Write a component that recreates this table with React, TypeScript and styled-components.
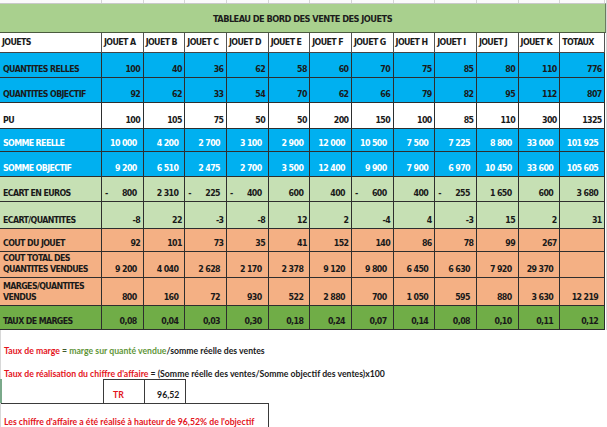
import React from "react";
import styled, { createGlobalStyle } from "styled-components";

const Global = createGlobalStyle`
  html, body { margin: 0; padding: 0; background: #ffffff; }
  body { font-family: "DejaVu Sans Condensed", "DejaVu Sans", sans-serif; }
  #root { width: 607px; height: 427px; overflow: hidden; }
`;

const COLS = "102px repeat(11, 41.67px) 45px";
const FONT = `"DejaVu Sans Condensed", "DejaVu Sans", sans-serif`;
const NOTE_FONT = `Lato, "Liberation Sans", sans-serif`;

const Page = styled.div`
  width: 607px;
  height: 427px;
  overflow: hidden;
  background: #fff;
  font-family: ${FONT};
`;

const Sheet = styled.div`
  width: 606px;
  border-right: 1px solid #d6d6d6;
`;

const GridRow = styled.div<{ $h: number }>`
  display: grid;
  grid-template-columns: ${COLS};
  height: ${(p) => p.$h}px;
`;

const GhostCell = styled.div`
  box-sizing: border-box;
  border-right: 1px solid #d4d4d4;
  background: #fafafa;
`;

const TitleBar = styled.div`
  box-sizing: border-box;
  height: 30px;
  width: 606px;
  background: #a9d08e;
  border-top: 1px solid #c9c9c9;
  border-bottom: 1px solid #4a5a3e;
  border-right: 1px solid #6d7d60;
  display: flex;
  align-items: center;
  justify-content: center;
  font-weight: 700;
  font-size: 9.2px;
  letter-spacing: -0.55px;
  color: #1c1c1c;
`;

const Cell = styled.div<{
  $bg: string;
  $fg: string;
  $pad: number;
  $label?: boolean;
  $center?: boolean;
}>`
  box-sizing: border-box;
  background: ${(p) => p.$bg};
  color: ${(p) => p.$fg};
  border-right: 1px solid #2e2e2e;
  border-bottom: 1px solid #2e2e2e;
  font-weight: 700;
  font-size: 8.8px;
  letter-spacing: -0.62px;
  line-height: 11.6px;
  display: flex;
  align-items: ${(p) => (p.$center ? "center" : "flex-end")};
  justify-content: ${(p) => (p.$label ? "flex-start" : "flex-end")};
  padding: ${(p) =>
    p.$label ? "0 2px 1px 3px" : `0 ${p.$pad}px 1px 3px`};
  white-space: nowrap;
  overflow: hidden;
`;

const HeadCell = styled(Cell)`
  padding: 0 2px 0 2px;
  border-right: 1px solid #555;
  border-bottom: 1px solid #444;
`;

const LabelText = styled.span`
  display: block;
  white-space: nowrap;
`;

const Acct = styled.span`
  flex: 1;
  display: flex;
  justify-content: space-between;
`;

const Notes = styled.div`
  padding-top: 14px;
  border-left: 1px solid #d8d8d8;
  font-family: ${NOTE_FONT};
`;

const Note = styled.div<{ $gap?: number }>`
  height: 12px;
  margin-top: ${(p) => p.$gap ?? 0}px;
  padding-left: 3px;
  display: flex;
  align-items: center;
  font-size: 8.7px;
  font-weight: 700;
  color: #1a1a1a;
  white-space: nowrap;
`;

const Red = styled.span`
  color: #e4141c;
`;

const Green = styled.span`
  color: #5f963a;
`;

const Eq = styled.span`
  color: #3f5a30;
`;

const TrRow = styled.div`
  display: grid;
  grid-template-columns: 102px 41.67px 41.67px;
  height: 24px;
`;

const TrSpacer = styled.div`
  border-left: 2px solid #7aa98a;
  margin-left: -1px;
`;

const TrCell = styled.div<{ $first?: boolean }>`
  box-sizing: border-box;
  border-top: 1px solid #3a3a3a;
  border-right: 1px solid #3a3a3a;
  border-left: ${(p) => (p.$first ? "1px solid #3a3a3a" : "none")};
  display: flex;
  align-items: flex-end;
  justify-content: ${(p) => (p.$first ? "flex-start" : "flex-end")};
  padding: ${(p) => (p.$first ? "0 0 3px 9px" : "0 6px 3px 0")};
  font-size: 8.7px;
  font-weight: 700;
  color: ${(p) => (p.$first ? "#e4141c" : "#1a1a1a")};
`;

const Conclusion = styled.div`
  box-sizing: border-box;
  width: 268px;
  height: 40px;
  border-top: 1px solid #3a3a3a;
  border-right: 1px solid #3a3a3a;
  padding: 12px 0 0 3px;
  font-size: 8.7px;
  font-weight: 700;
  color: #e4141c;
  white-space: nowrap;
`;

const BLUE = "#00b0f0";
const LGREEN = "#c6e0b4";
const SALMON = "#f4b084";
const DGREEN = "#70ad47";
const WHITE = "#ffffff";
const DARK = "#1a1a1a";

type RowDef = {
  label: string;
  h: number;
  bg: string;
  fg: string;
  pad: number;
  values: string[];
  acct?: boolean;
};

const headers = [
  "JOUET A",
  "JOUET B",
  "JOUET C",
  "JOUET D",
  "JOUET E",
  "JOUET F",
  "JOUET G",
  "JOUET H",
  "JOUET I",
  "JOUET J",
  "JOUET K",
  "TOTAUX",
];

const rows: RowDef[] = [
  {
    label: "QUANTITES RELLES",
    h: 25,
    bg: BLUE,
    fg: DARK,
    pad: 2.5,
    values: ["100", "40", "36", "62", "58", "60", "70", "75", "85", "80", "110", "776"],
  },
  {
    label: "QUANTITES OBJECTIF",
    h: 25,
    bg: BLUE,
    fg: DARK,
    pad: 2.5,
    values: ["92", "62", "33", "54", "70", "62", "66", "79", "82", "95", "112", "807"],
  },
  {
    label: "PU",
    h: 26,
    bg: WHITE,
    fg: DARK,
    pad: 2.5,
    values: ["100", "105", "75", "50", "50", "200", "150", "100", "85", "110", "300", "1325"],
  },
  {
    label: "SOMME REELLE",
    h: 23,
    bg: BLUE,
    fg: WHITE,
    pad: 6,
    values: ["10 000", "4 200", "2 700", "3 100", "2 900", "12 000", "10 500", "7 500", "7 225", "8 800", "33 000", "101 925"],
  },
  {
    label: "SOMME OBJECTIF",
    h: 25,
    bg: BLUE,
    fg: WHITE,
    pad: 6,
    values: ["9 200", "6 510", "2 475", "2 700", "3 500", "12 400", "9 900", "7 900", "6 970", "10 450", "33 600", "105 605"],
  },
  {
    label: "ECART EN EUROS",
    h: 25,
    bg: LGREEN,
    fg: DARK,
    pad: 6,
    acct: true,
    values: ["-800", "2 310", "-225", "-400", "600", "400", "-600", "400", "-255", "1 650", "600", "3 680"],
  },
  {
    label: "ECART/QUANTITES",
    h: 27,
    bg: LGREEN,
    fg: DARK,
    pad: 2.5,
    values: ["-8", "22", "-3", "-8", "12", "2", "-4", "4", "-3", "15", "2", "31"],
  },
  {
    label: "COUT DU JOUET",
    h: 23,
    bg: SALMON,
    fg: DARK,
    pad: 2.5,
    values: ["92", "101", "73", "35", "41", "152", "140", "86", "78", "99", "267", ""],
  },
  {
    label: "COUT TOTAL DES QUANTITES VENDUES",
    h: 26,
    bg: SALMON,
    fg: DARK,
    pad: 6,
    values: ["9 200", "4 040", "2 628", "2 170", "2 378", "9 120", "9 800", "6 450", "6 630", "7 920", "29 370", ""],
  },
  {
    label: "MARGES/QUANTITES VENDUS",
    h: 28,
    bg: SALMON,
    fg: DARK,
    pad: 6,
    values: ["800", "160", "72", "930", "522", "2 880", "700", "1 050", "595", "880", "3 630", "12 219"],
  },
  {
    label: "TAUX DE MARGES",
    h: 24,
    bg: DGREEN,
    fg: DARK,
    pad: 6,
    values: ["0,08", "0,04", "0,03", "0,30", "0,18", "0,24", "0,07", "0,14", "0,08", "0,10", "0,11", "0,12"],
  },
];

const labelFor = (label: string) => {
  if (label === "COUT TOTAL DES QUANTITES VENDUES")
    return (
      <LabelText>
        COUT TOTAL DES
        <br />
        QUANTITES VENDUES
      </LabelText>
    );
  if (label === "MARGES/QUANTITES VENDUS")
    return (
      <LabelText>
        MARGES/QUANTITES
        <br />
        VENDUS
      </LabelText>
    );
  return label;
};

const ValueCell: React.FC<{ row: RowDef; v: string }> = ({ row, v }) => {
  if (row.acct && v.startsWith("-")) {
    return (
      <Cell $bg={row.bg} $fg={row.fg} $pad={row.pad}>
        <Acct>
          <span>-</span>
          <span>{v.slice(1)}</span>
        </Acct>
      </Cell>
    );
  }
  return (
    <Cell $bg={row.bg} $fg={row.fg} $pad={row.pad}>
      {v}
    </Cell>
  );
};

export default function App() {
  return (
    <Page>
      <Global />
      <Sheet>
        <GridRow $h={3}>
          {Array.from({ length: 13 }).map((_, i) => (
            <GhostCell key={i} />
          ))}
        </GridRow>
        <TitleBar>TABLEAU DE BORD DES VENTE DES JOUETS</TitleBar>
        <GridRow $h={20}>
          <HeadCell $bg={WHITE} $fg={DARK} $pad={2} $label $center>
            JOUETS
          </HeadCell>
          {headers.map((h) => (
            <HeadCell key={h} $bg={WHITE} $fg={DARK} $pad={2} $label $center>
              {h}
            </HeadCell>
          ))}
        </GridRow>
        {rows.map((row) => (
          <GridRow key={row.label} $h={row.h}>
            <Cell $bg={row.bg} $fg={row.fg} $pad={2} $label>
              {labelFor(row.label)}
            </Cell>
            {row.values.map((v, i) => (
              <ValueCell key={i} row={row} v={v} />
            ))}
          </GridRow>
        ))}
      </Sheet>
      <Notes>
        <Note>
          <Red>Taux de marge</Red>
          <Eq>&nbsp;=&nbsp;</Eq>
          <Green>marge sur quanté vendue</Green>/somme réelle des ventes
        </Note>
        <Note $gap={11}>
          <Red>Taux de réalisation du chiffre d'affaire</Red>&nbsp;= (Somme réelle des
          ventes/Somme objectif des ventes)x100
        </Note>
        <TrRow>
          <TrSpacer />
          <TrCell $first>TR</TrCell>
          <TrCell>96,52</TrCell>
        </TrRow>
        <Conclusion>
          Les chiffre d'affaire a été réalisé à hauteur de 96,52% de l'objectif
        </Conclusion>
      </Notes>
    </Page>
  );
}
